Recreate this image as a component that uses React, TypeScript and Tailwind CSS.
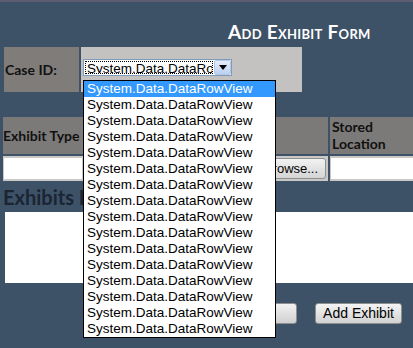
const ROWS = Array.from({ length: 16 }, (_, i) => i);

function Triangle() {
  return (
    <svg width="8" height="5" viewBox="0 0 8 5">
      <path d="M0 0 L8 0 L4 5 Z" fill="#000" />
    </svg>
  );
}

export default function App() {
  return (
    <div className="relative w-[413px] h-[348px] overflow-hidden bg-[#3d5267] font-['Lato','Open_Sans',sans-serif]">
      <div className="h-[2px] bg-[#5c5d73]" />

      {/* title */}
      <div className="pl-[228px] pt-[19px] h-[45px] text-white font-bold text-[19px] leading-[21px] [font-variant:small-caps] tracking-[0.3px]">
        Add Exhibit Form
      </div>

      {/* case id row */}
      <div className="flex gap-[2px] pl-[4px]">
        <div className="w-[75px] h-[45px] bg-[#7f7c7a] flex items-center pl-[1px] text-[14px] font-bold text-[#111]">
          Case ID:
        </div>
        <div className="w-[221px] h-[45px] bg-[#c4c2c1] pt-[12px] pl-[2px]">
          <div className="flex w-[149px] h-[17px] bg-white border border-[#7f9db9]">
            <div className="flex-1 m-[1px] border border-dotted border-black overflow-hidden whitespace-nowrap text-[13.5px] leading-[13px] font-['Liberation_Sans',Arial,sans-serif] text-black pl-[1px]">
              System.Data.DataRowView
            </div>
            <div className="w-[17px] h-full flex items-center justify-center rounded-[2px] border border-[#b4c7e6] bg-gradient-to-b from-[#e4edfb] to-[#bcd0f0]">
              <Triangle />
            </div>
          </div>
        </div>
      </div>

      {/* exhibit table */}
      <div className="mt-[25px] ml-[3px] grid grid-cols-[80px_243px_85px] gap-[2px]">
        <div className="h-[37px] bg-[#7c7a78] flex items-center text-[14px] font-bold text-[#111] whitespace-nowrap">
          Exhibit Type
        </div>
        <div className="h-[37px] bg-[#7c7a78]" />
        <div className="h-[37px] bg-[#7c7a78] pl-[2px] pt-[1px] text-[14px] font-bold leading-[17px] text-[#111]">
          Stored
          <br />
          Location
        </div>

        <div className="h-[25px] bg-[#c9c8c7] px-[1px] py-[2px]">
          <div className="h-full bg-white" />
        </div>
        <div className="h-[25px] bg-[#c9c8c7] flex items-center justify-end pr-[2px]">
          <div className="h-[21px] w-[70px] rounded-[3px] border border-[#8e8f8f] bg-gradient-to-b from-[#f2f2f2] to-[#d4d4d4] flex items-center justify-center text-[13px] font-['Liberation_Sans',Arial,sans-serif] text-black">
            Browse...
          </div>
        </div>
        <div className="h-[25px] bg-[#c9c8c7] px-[1px] py-[2px]">
          <div className="h-full bg-white" />
        </div>
      </div>

      {/* exhibits list */}
      <div className="mt-[5px] ml-[3px] text-[20px] leading-[22px] font-bold text-[#1b2433]">
        Exhibits List
      </div>
      <div className="mt-[4px] ml-[5px] h-[71px] bg-white" />

      <div className="mt-[20px] flex gap-[18px] pl-[240px]">
        <div className="w-[57px] h-[21px] rounded-[3px] border border-[#8e8f8f] bg-gradient-to-b from-[#f2f2f2] to-[#d0d0d0]" />
        <div className="w-[87px] h-[21px] rounded-[3px] border border-[#8e8f8f] bg-gradient-to-b from-[#f4f4f4] to-[#d2d2d2] flex items-center justify-center text-[14px] font-['Liberation_Sans',Arial,sans-serif] text-black">
          Add Exhibit
        </div>
      </div>

      {/* open dropdown list */}
      <div className="absolute left-[83px] top-[80px] w-[193px] border border-black bg-white font-['Liberation_Sans',Arial,sans-serif] text-[13.5px]">
        {ROWS.map((i) => (
          <div
            key={i}
            className={
              i === 0
                ? "h-[16px] leading-[16px] pl-[3px] bg-[#3399ff] text-white whitespace-nowrap"
                : "h-[16px] leading-[16px] pl-[3px] text-black whitespace-nowrap"
            }
          >
            System.Data.DataRowView
          </div>
        ))}
      </div>
    </div>
  );
}
